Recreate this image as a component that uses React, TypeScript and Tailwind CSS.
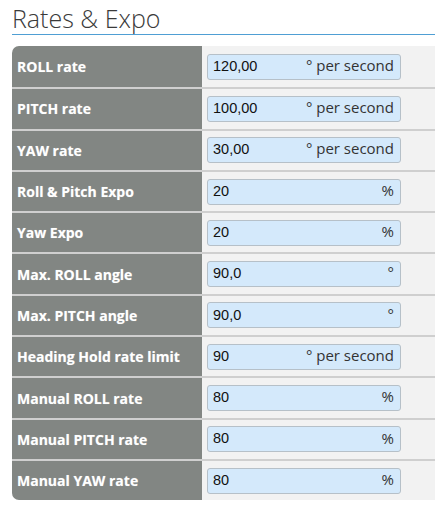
// Rates & Expo settings table

const ROWS = [
  { label: "ROLL rate", value: "120,00", unit: "° per second" },
  { label: "PITCH rate", value: "100,00", unit: "° per second" },
  { label: "YAW rate", value: "30,00", unit: "° per second" },
  { label: "Roll & Pitch Expo", value: "20", unit: "%" },
  { label: "Yaw Expo", value: "20", unit: "%" },
  { label: "Max. ROLL angle", value: "90,0", unit: "°" },
  { label: "Max. PITCH angle", value: "90,0", unit: "°" },
  { label: "Heading Hold rate limit", value: "90", unit: "° per second" },
  { label: "Manual ROLL rate", value: "80", unit: "%" },
  { label: "Manual PITCH rate", value: "80", unit: "%" },
  { label: "Manual YAW rate", value: "80", unit: "%" },
] as const;

export default function App() {
  return (
    <div className="min-h-[523px] w-[435px] bg-white pl-[12px] font-['Open_Sans',sans-serif]">
      <div className="border-b border-[#4f9fd4] pt-[4px] pb-[1px]">
        <h2 className="text-[25px] leading-[29px] font-light text-[#3a3a3a]">
          Rates &amp; Expo
        </h2>
      </div>

      <div className="mt-[11px] overflow-hidden rounded-l-[7px]">
        {ROWS.map((row, i) => (
          <div
            key={row.label}
            className={`flex h-[41.3px] ${i > 0 ? "border-t-2 border-[#cfcfcf]" : ""}`}
          >
            <div className="flex w-[190px] items-center bg-[#828683] pl-[5px] text-[14px] font-bold text-white [text-shadow:0_0_1px_rgba(255,255,255,0.4)]">
              {row.label}
            </div>
            <div className="flex flex-1 items-center bg-[#f2f2f2] pl-[5px]">
              <div className="flex h-[26px] w-[194px] items-center justify-between rounded-[3px] border border-[#b6c0c8] bg-[#d4e9fb] pr-[6px] pl-[5px]">
                <span className="font-['Liberation_Sans',sans-serif] text-[14.5px] text-[#111]">
                  {row.value}
                </span>
                <span className="mb-[3px] text-[15px] text-[#333]">{row.unit}</span>
              </div>
            </div>
          </div>
        ))}
      </div>
    </div>
  );
}
